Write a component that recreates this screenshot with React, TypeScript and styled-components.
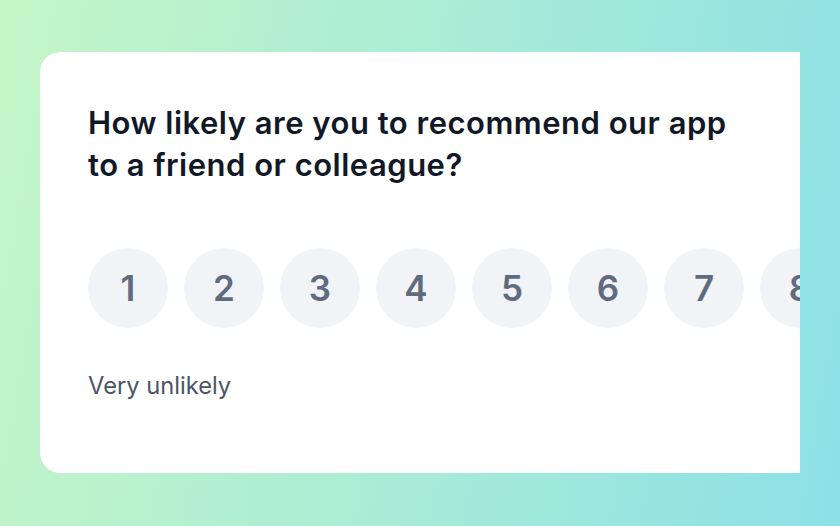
import React from "react";
import styled, { createGlobalStyle } from "styled-components";

const Global = createGlobalStyle`
  html, body { margin: 0; padding: 0; }
  body { font-family: Inter, "Noto Sans", sans-serif; }
  * { box-sizing: border-box; }
`;

const Stage = styled.div`
  width: 840px;
  height: 526px;
  padding: 52px 40px 54px 40px;
  background: linear-gradient(100deg, #c5f6c7 0%, #a9ecd6 50%, #8ce0e6 100%);
  overflow: hidden;
`;

const Viewport = styled.div`
  width: 760px;
  height: 421px;
  overflow: hidden;
  border-radius: 20px 0 0 20px;
`;

const Card = styled.section`
  width: 1040px;
  height: 421px;
  background: #ffffff;
  border-radius: 20px;
  padding: 50px 48px 0 48px;
  display: flex;
  flex-direction: column;
`;

const Question = styled.h2`
  margin: 0;
  max-width: 665px;
  font-family: Inter, sans-serif;
  font-size: 31px;
  line-height: 42px;
  letter-spacing: 0.5px;
  font-weight: 600;
  color: #111827;
`;

const Scale = styled.div`
  margin-top: 62px;
  display: flex;
  gap: 16px;
`;

const ScoreButton = styled.button`
  flex: none;
  width: 80px;
  height: 80px;
  border: none;
  border-radius: 50%;
  background: #f1f3f6;
  color: #5f6b7e;
  font-family: Inter, sans-serif;
  font-size: 35px;
  font-weight: 600;
  display: flex;
  align-items: center;
  justify-content: center;
  padding: 0;
  cursor: pointer;
`;

const Labels = styled.div`
  margin-top: 42px;
  display: flex;
  justify-content: space-between;
  font-family: Inter, sans-serif;
  font-size: 23.7px;
  line-height: 32px;
  color: #4b5563;
`;

export default function App() {
  const scores = [1, 2, 3, 4, 5, 6, 7, 8, 9, 10];
  return (
    <>
      <Global />
      <Stage>
        <Viewport>
          <Card>
            <Question>How likely are you to recommend our app to a friend or colleague?</Question>
            <Scale>
              {scores.map((s) => (
                <ScoreButton key={s}>{s}</ScoreButton>
              ))}
            </Scale>
            <Labels>
              <span>Very unlikely</span>
              <span>Very likely</span>
            </Labels>
          </Card>
        </Viewport>
      </Stage>
    </>
  );
}
